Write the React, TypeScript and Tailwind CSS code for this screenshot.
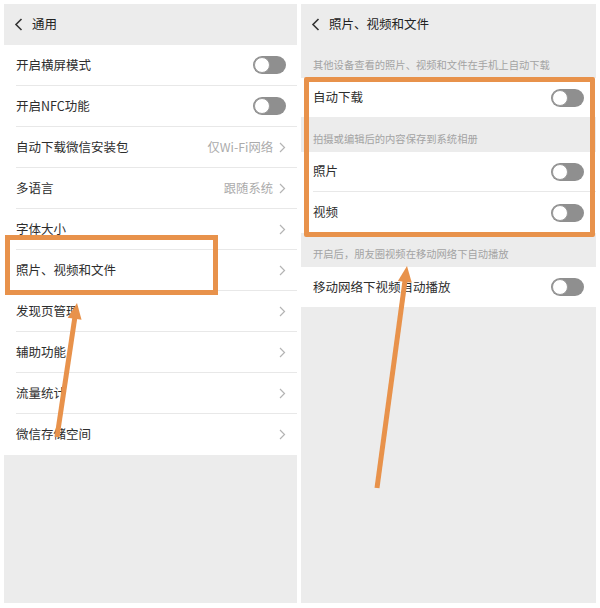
import React from 'react';

const font = { fontFamily: '"Noto Sans CJK SC", "Noto Sans", sans-serif' };

function Toggle() {
  return (
    <div className="flex h-[18px] w-[33px] items-center rounded-full bg-[#8f8f8f] p-px">
      <div className="h-[16px] w-[16px] rounded-full border border-[#9a9a9a] bg-white" />
    </div>
  );
}

function Chevron() {
  return (
    <svg width="7" height="11" viewBox="0 0 7 11" fill="none">
      <path d="M1 1l4.5 4.5L1 10" stroke="#b4b4b4" strokeWidth="1.2" />
    </svg>
  );
}

function Back() {
  return (
    <svg width="9" height="13" viewBox="0 0 9 13" fill="none">
      <path d="M7.5 1L2 6.5 7.5 12" stroke="#333" strokeWidth="1.6" />
    </svg>
  );
}

type Row = { label: string; value?: string; toggle?: boolean };

const leftRows: Row[] = [
  { label: '开启横屏模式', toggle: true },
  { label: '开启NFC功能', toggle: true },
  { label: '自动下载微信安装包', value: '仅Wi-Fi网络' },
  { label: '多语言', value: '跟随系统' },
  { label: '字体大小' },
  { label: '照片、视频和文件' },
  { label: '发现页管理' },
  { label: '辅助功能' },
  { label: '流量统计' },
  { label: '微信存储空间' },
];

function SettingRow({ row, last }: { row: Row; last?: boolean }) {
  return (
    <div className="h-[41px] bg-white pl-[12px]">
      <div
        className={`flex h-full items-center justify-between pr-[11px] ${last ? '' : 'border-b border-[#e8e8e8]'}`}
      >
        <span className="text-[12.5px] text-[#2d2d2d]">{row.label}</span>
        {row.toggle ? (
          <Toggle />
        ) : (
          <div className="flex items-center gap-[6px]">
            {row.value && <span className="text-[12.3px] text-[#ababab]">{row.value}</span>}
            <Chevron />
          </div>
        )}
      </div>
    </div>
  );
}

function SectionLabel({ text, h }: { text: string; h: string }) {
  return (
    <div className={`flex items-end pb-[6px] pl-[12px] ${h}`}>
      <span className="text-[10.3px] leading-[14px] text-[#a3a3a3]">{text}</span>
    </div>
  );
}

function ToggleRow({ label, h, divider }: { label: string; h: string; divider?: boolean }) {
  return (
    <div className={`bg-white pl-[12px] ${h}`}>
      <div
        className={`flex h-full items-center justify-between pr-[12px] ${divider ? 'border-b border-[#e8e8e8]' : ''}`}
      >
        <span className="text-[12.5px] text-[#2d2d2d]">{label}</span>
        <Toggle />
      </div>
    </div>
  );
}

function arrow(tx: number, ty: number, hx: number, hy: number) {
  const dx = hx - tx;
  const dy = hy - ty;
  const len = Math.hypot(dx, dy);
  const ux = dx / len;
  const uy = dy / len;
  const bx = hx - ux * 16;
  const by = hy - uy * 16;
  const px = -uy;
  const py = ux;
  return {
    line: { x1: tx, y1: ty, x2: bx + ux, y2: by + uy },
    head: `${hx},${hy} ${bx + px * 7},${by + py * 7} ${bx - px * 7},${by - py * 7}`,
  };
}

export default function App() {
  const a1 = arrow(57, 437, 77, 303);
  const a2 = arrow(377, 488, 407, 266);

  return (
    <div className="relative flex h-[608px] w-[600px] gap-[4px] bg-white pb-[5px] pl-[4px] pr-[4px] pt-[4px]" style={font}>
      {/* left panel */}
      <div className="flex w-[293px] flex-col bg-[#ececec]">
        <div className="flex h-[41px] items-center gap-[9px] pl-[10px]">
          <Back />
          <span className="text-[12.5px] text-[#222]">通用</span>
        </div>
        {leftRows.map((r, i) => (
          <SettingRow key={r.label} row={r} last={i === leftRows.length - 1} />
        ))}
      </div>

      {/* right panel */}
      <div className="flex w-[295px] flex-col bg-[#ececec]">
        <div className="flex h-[40px] items-center gap-[9px] pl-[10px]">
          <Back />
          <span className="text-[12.5px] text-[#222]">照片、视频和文件</span>
        </div>
        <SectionLabel text="其他设备查看的照片、视频和文件在手机上自动下载" h="h-[34px]" />
        <ToggleRow label="自动下载" h="h-[39px]" />
        <SectionLabel text="拍摄或编辑后的内容保存到系统相册" h="h-[35px]" />
        <ToggleRow label="照片" h="h-[40px]" divider />
        <ToggleRow label="视频" h="h-[41px]" />
        <SectionLabel text="开启后，朋友圈视频在移动网络下自动播放" h="h-[34px]" />
        <ToggleRow label="移动网络下视频自动播放" h="h-[40px]" />
      </div>

      {/* annotations */}
      <div className="pointer-events-none absolute left-[5px] top-[235px] h-[60px] w-[213px] border-[5px] border-[#e8924b]" />
      <div className="pointer-events-none absolute left-[304px] top-[77px] h-[160px] w-[291px] rounded-[2px] border-[5px] border-[#e8924b]" />
      <svg className="pointer-events-none absolute left-0 top-0" width="600" height="608">
        {[a1, a2].map((a, i) => (
          <g key={i}>
            <line {...a.line} stroke="#e8924b" strokeWidth="5" />
            <polygon points={a.head} fill="#e8924b" />
          </g>
        ))}
      </svg>
    </div>
  );
}
